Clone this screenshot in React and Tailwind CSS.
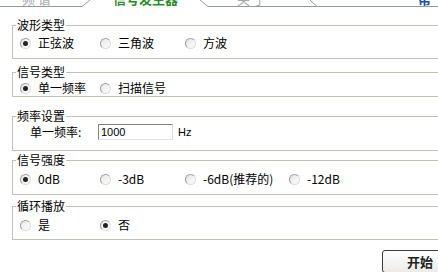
const font = { fontFamily: "'Noto Sans CJK SC', 'DejaVu Sans', sans-serif" }

function Radio({ checked, label, className = '' }) {
  return (
    <div className={`flex items-center h-[16px] ${className}`}>
      <span className="relative w-[11px] h-[11px] rounded-full border border-t-[#a0a0a0] border-l-[#a0a0a0] border-r-[#dcdcdc] border-b-[#dcdcdc] bg-gradient-to-br from-[#e6e6e0] to-white flex items-center justify-center shrink-0">
        {checked && <span className="w-[5px] h-[5px] rounded-full bg-[#222]" />}
      </span>
      <span className="ml-[7px] text-[12px] leading-[16px] text-black whitespace-nowrap">{label}</span>
    </div>
  )
}

function Group({ title, className = '', children }) {
  return (
    <div className={`relative w-[440px] border border-[#c2c2b8] ${className}`}>
      <span className="absolute -top-[8px] left-[3px] bg-white px-[1px] text-[12px] leading-[14px] text-black">{title}</span>
      {children}
    </div>
  )
}

export default function App() {
  return (
    <div className="w-[438px] h-[272px] bg-white overflow-hidden" style={font}>
      <div className="relative h-[7px] overflow-hidden">
        <svg className="absolute inset-0" width="438" height="7">
          <path d="M0 6.5 H82 L90 0" stroke="#919b9c" fill="none" />
          <path d="M200 0 L208 6.5 H438" stroke="#919b9c" fill="none" />
          <path d="M310 0 L317 6.5" stroke="#919b9c" fill="none" />
        </svg>
        <div className="flex -mt-[8px] text-[13px] leading-[13px] whitespace-nowrap">
          <span className="ml-[22px] w-[91px] text-[#a8a8a8]">频 谱</span>
          <span className="w-[124px] font-bold text-[#2b8a2b]">信号发生器</span>
          <span className="w-[181px] text-[#a8a8a8]">关 于</span>
          <span className="font-bold text-[#1d4fa3]">帮</span>
        </div>
      </div>

      <div className="pl-[12px]">
        <Group title="波形类型" className="mt-[18px] h-[34px] pt-[9px] pl-[7px]">
          <div className="flex">
            <Radio checked label="正弦波" className="w-[80px]" />
            <Radio label="三角波" className="w-[85px]" />
            <Radio label="方波" />
          </div>
        </Group>

        <Group title="信号类型" className="mt-[13px] h-[25px] pt-[7px] pl-[7px]">
          <div className="flex">
            <Radio checked label="单一频率" className="w-[80px]" />
            <Radio label="扫描信号" />
          </div>
        </Group>

        <Group title="频率设置" className="mt-[19px] h-[35px] pt-[7px] pl-[17px]">
          <div className="flex items-center h-[16px] text-[12px] text-black">
            <span className="w-[68px]">单一频率:</span>
            <div className="w-[75px] h-[16px] border border-t-[#808080] border-l-[#808080] border-r-[#e0e0e0] border-b-[#e0e0e0] bg-white pl-[2px] text-[11px] leading-[14px]" style={{ fontFamily: "'Liberation Sans', sans-serif" }}>1000</div>
            <span className="ml-[5px] text-[11px]" style={{ fontFamily: "'Liberation Sans', sans-serif" }}>Hz</span>
          </div>
        </Group>

        <Group title="信号强度" className="mt-[9px] h-[35px] pt-[10px] pl-[7px]">
          <div className="flex">
            <Radio checked label="0dB" className="w-[80px]" />
            <Radio label="-3dB" className="w-[85px]" />
            <Radio label="-6dB(推荐的)" className="w-[104px]" />
            <Radio label="-12dB" />
          </div>
        </Group>

        <Group title="循环播放" className="mt-[11px] h-[34px] pt-[10px] pl-[7px]">
          <div className="flex">
            <Radio label="是" className="w-[80px]" />
            <Radio checked label="否" />
          </div>
        </Group>

        <button className="mt-[10px] ml-[370px] w-[76px] h-[23px] rounded-[3px] border border-[#3c3c3c] bg-gradient-to-b from-white to-[#ecebe6] text-[13px] font-bold text-[#222] leading-[20px] text-center">
          开始
        </button>
      </div>
    </div>
  )
}
